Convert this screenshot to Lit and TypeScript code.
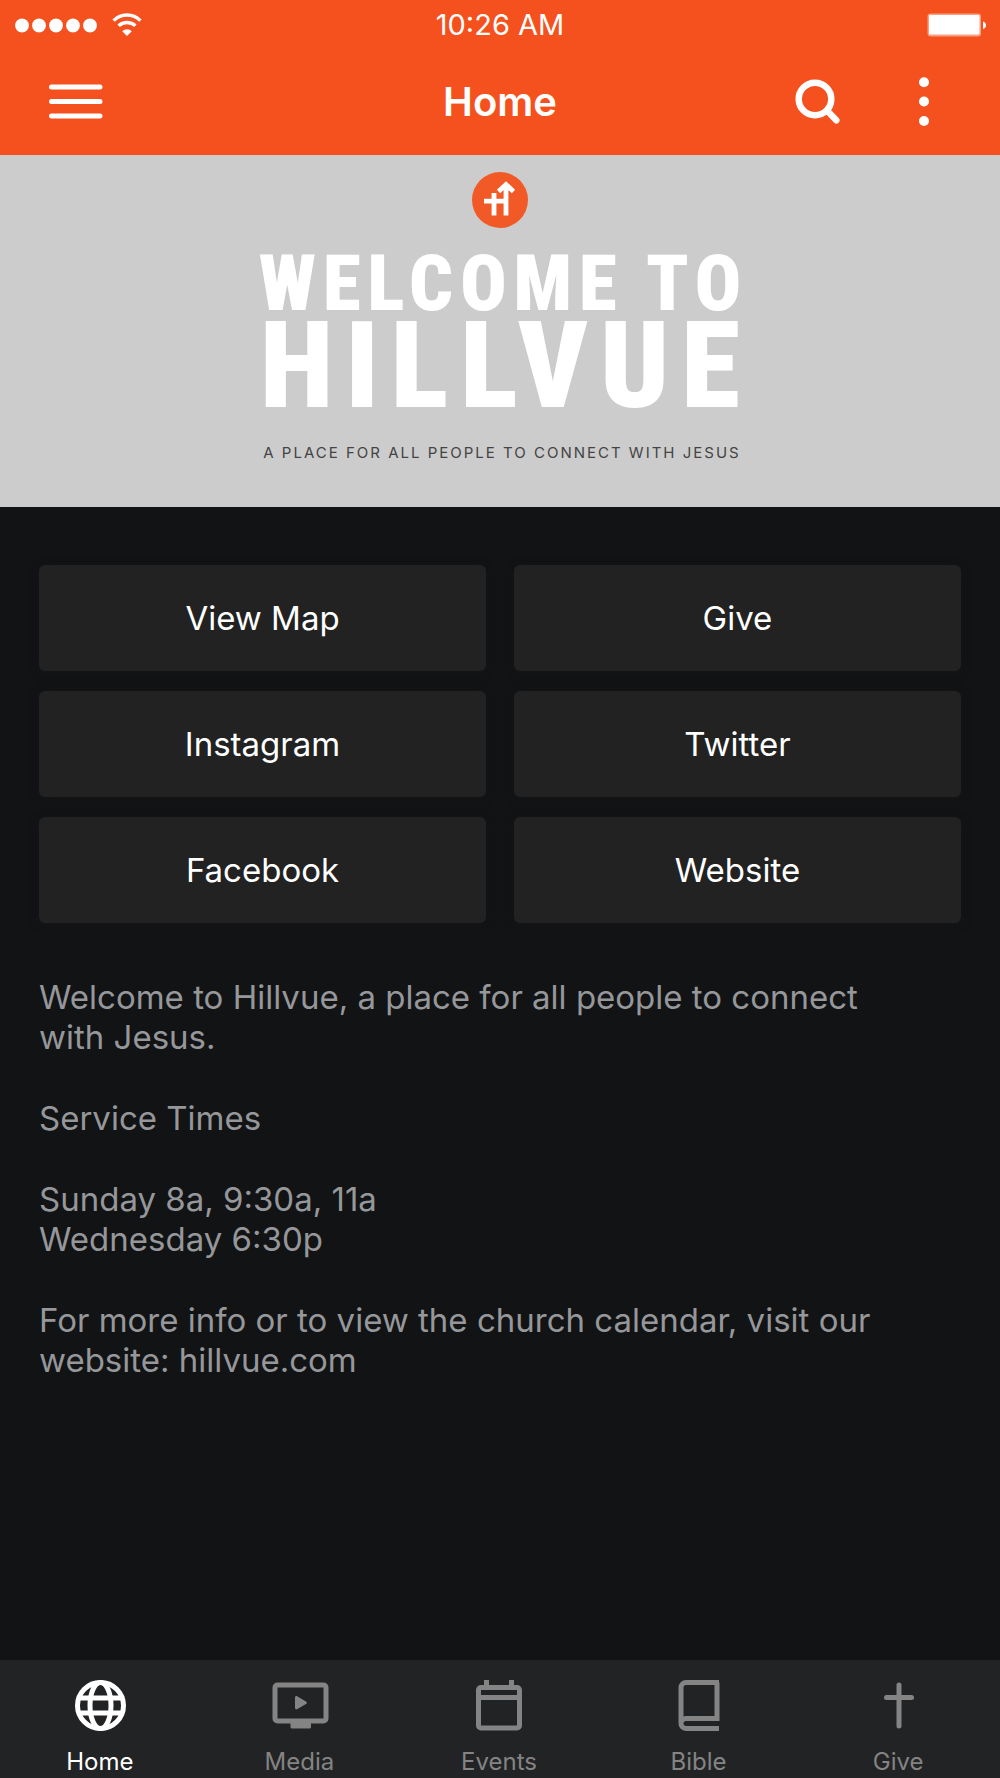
import { LitElement, html, css, svg } from "lit";
import { customElement, state } from "lit/decorators.js";

const icons = {
  home: svg`<g fill="none" stroke="currentColor" stroke-width="5"><circle cx="30.500" cy="26.500" r="23"/><ellipse cx="30.500" cy="26.500" rx="10.500" ry="23"/><path d="M10 19H51M10 34H51"/></g>`,
  media: svg`<rect x="6" y="6" width="51" height="36" rx="2.500" fill="none" stroke="currentColor" stroke-width="5"/><path d="M21.500 42H42V48a1.500 1.500 0 0 1-1.500 1.500H23A1.500 1.500 0 0 1 21.500 48Z"/><path d="M26 19c0-2 1.200-2.300 2.500-1.500l8.500 5c1.200.8 1.200 1.800 0 2.600l-8.500 5c-1.300.8-2.500.4-2.500-1.500Z"/>`,
  events: svg`<rect x="9.500" y="8.500" width="41" height="40.500" rx="2.500" fill="none" stroke="currentColor" stroke-width="5"/><path d="M15 1h5v6h-5ZM40 1h5v6h-5ZM10 16h40v5H10Z"/>`,
  bible: svg`<path d="M50 3.500H17a5 5 0 0 0-5 5V44a5 5 0 0 0 5 5.500H50M48 3.500V39.500H17a5 5 0 0 0-5 5" fill="none" stroke="currentColor" stroke-width="5"/>`,
  give: svg`<path d="M31 6V47M18.500 18.500H43.500" fill="none" stroke="currentColor" stroke-width="5" stroke-linecap="round"/>`,
};

const tabs: { id: keyof typeof icons; label: string }[] = [
  { id: "home", label: "Home" },
  { id: "media", label: "Media" },
  { id: "events", label: "Events" },
  { id: "bible", label: "Bible" },
  { id: "give", label: "Give" },
];

const links = ["View Map", "Give", "Instagram", "Twitter", "Facebook", "Website"];

@customElement("app-root")
export class AppRoot extends LitElement {
  @state() private active = "home";

  static styles = css`
    :host {
      display: flex;
      flex-direction: column;
      min-height: 100vh;
      background: #121315;
      color: #fff;
      font-family: Inter, "Liberation Sans", sans-serif;
    }
    * { box-sizing: border-box; }
    svg { display: block; fill: currentColor; }
    a { color: inherit; text-decoration: none; }
    button {
      border: 0;
      padding: 0;
      background: none;
      color: inherit;
      font: inherit;
      cursor: pointer;
    }
    .top { background: #f5511e; }
    .status, .nav {
      display: grid;
      grid-template-columns: 1fr auto 1fr;
      align-items: center;
    }
    .status { height: 50px; padding: 0 14px; }
    .signal { display: flex; align-items: center; gap: 14px; }
    .time { font-size: 29px; line-height: 32px; }
    .battery { justify-self: end; }
    .nav { height: 105px; padding: 0 48px 2px; }
    .menu { justify-self: start; }
    .title { margin: 0; font-size: 40px; line-height: 48px; font-weight: 600; }
    .actions { justify-self: end; display: flex; gap: 58px; padding-right: 4px; }
    .hero {
      display: flex;
      flex-direction: column;
      align-items: center;
      padding: 17px 0 44px;
      background: #ccc;
    }
    .banner {
      margin: 26px 0 0;
      font-family: "Roboto Condensed", "Liberation Sans", sans-serif;
      font-weight: 900;
      text-align: center;
      white-space: nowrap;
    }
    .line { display: block; }
    .small { padding-left: 7px; font-size: 77px; line-height: 60px; letter-spacing: 7px; }
    .large { padding-left: 12px; font-size: 120px; line-height: 104px; letter-spacing: 12px; }
    .tag {
      margin: 25px 0 0;
      padding-left: 4px;
      font-size: 15px;
      line-height: 20px;
      letter-spacing: 2px;
      color: #444;
    }
    .content { flex: 1; padding: 58px 39px 40px; }
    .links {
      display: grid;
      grid-template-columns: 1fr 1fr;
      gap: 20px 28px;
    }
    .link {
      display: flex;
      align-items: center;
      justify-content: center;
      height: 106px;
      border-radius: 6px;
      background: #222;
      box-shadow: 0 2px 8px #16171799;
      font-size: 33px;
    }
    .copy {
      display: flex;
      flex-direction: column;
      gap: 41px;
      margin-top: 54px;
      color: #96979a;
      font-size: 33px;
      line-height: 40px;
    }
    .copy p { margin: 0; }
    .tabs {
      display: grid;
      grid-template-columns: repeat(5, 1fr);
      height: 118px;
      padding-right: 2px;
      background: #222325;
    }
    .tab {
      display: flex;
      flex-direction: column;
      align-items: center;
      gap: 15px;
      padding-top: 19px;
      color: #848484;
      font-size: 24px;
      line-height: 28px;
    }
    .tab.on { color: #fff; }
  `;

  render() {
    return html`
      <header class="top">
        <div class="status">
          <div class="signal">
            <svg width="84" height="16" viewBox="0 0 84 16" role="img" aria-label="Signal">
              ${[8, 25, 42, 59, 76].map((x) => svg`<circle cx=${x} cy="8.5" r="6.9"/>`)}
            </svg>
            <svg width="30" height="24" viewBox="0 0 30 24" role="img" aria-label="Wi-Fi">
              <path d="M1.600 7.600a19 19 0 0 1 26.800 0M6.600 12.800a12.500 12.500 0 0 1 16.800 0" fill="none" stroke="#fff" stroke-width="3.400"/>
              <path d="M15 23l-4.800-4.800a7 7 0 0 1 9.600 0Z"/>
            </svg>
          </div>
          <span class="time">10:26 AM</span>
          <svg class="battery" width="59" height="24" viewBox="0 0 59 24" role="img" aria-label="Battery full">
            <rect x=".5" y=".5" width="53.500" height="23" rx="3" fill="#f9a083"/>
            <rect x="2" y="2" width="50.500" height="19.500" rx="1"/>
            <path d="M56 8.500c4 1 4 6.500 0 7.500Z"/>
          </svg>
        </div>
        <div class="nav">
          <button class="menu" aria-label="Menu">
            <svg width="56" height="40" viewBox="0 0 56 40"><path d="M3.500 5H52M3.500 19.500H52M3.500 34H52" stroke="#fff" stroke-width="5" stroke-linecap="round"/></svg>
          </button>
          <h1 class="title">Home</h1>
          <div class="actions">
            <button aria-label="Search">
              <svg width="48" height="52" viewBox="0 0 48 52"><g fill="none" stroke="#fff" stroke-width="6.500" stroke-linecap="round"><circle cx="21" cy="23" r="16.300"/><path d="M33 34.500L42.300 44.300"/></g></svg>
            </button>
            <button aria-label="More options">
              <svg width="48" height="52" viewBox="0 0 48 52"><circle cx="24" cy="6.200" r="5"/><circle cx="24" cy="25.500" r="5"/><circle cx="24" cy="45" r="5"/></svg>
            </button>
          </div>
        </div>
      </header>
      <section class="hero">
        <svg width="56" height="56" viewBox="0 0 56 56" role="img" aria-label="Hillvue logo">
          <circle cx="28" cy="28" r="28" fill="#f15a27"/>
          <path d="M12 29.200H34M22 21V43.500M34 43.500V14M26.500 19.500L34 12.500L41.500 19.500" fill="none" stroke="#fff" stroke-width="4.800"/>
        </svg>
        <h2 class="banner"><span class="line small">WELCOME TO</span><span class="line large">HILLVUE</span></h2>
        <p class="tag">A PLACE FOR ALL PEOPLE TO CONNECT WITH JESUS</p>
      </section>
      <main class="content">
        <div class="links">
          ${links.map((label) => html`<a class="link" href="#">${label}</a>`)}
        </div>
        <div class="copy">
          <p>Welcome to Hillvue, a place for all people to connect<br />with Jesus.</p>
          <p>Service Times</p>
          <p>Sunday 8a, 9:30a, 11a<br />Wednesday 6:30p</p>
          <p>For more info or to view the church calendar, visit our<br />website: hillvue.com</p>
        </div>
      </main>
      <nav class="tabs" aria-label="Sections">
        ${tabs.map(
          (t) => html`<button class="tab ${t.id === this.active ? "on" : ""}" @click=${() => (this.active = t.id)}>
            <svg width="60" height="54" viewBox="0 0 60 54" aria-hidden="true">${icons[t.id]}</svg>
            <span>${t.label}</span>
          </button>`
        )}
      </nav>
    `;
  }
}
